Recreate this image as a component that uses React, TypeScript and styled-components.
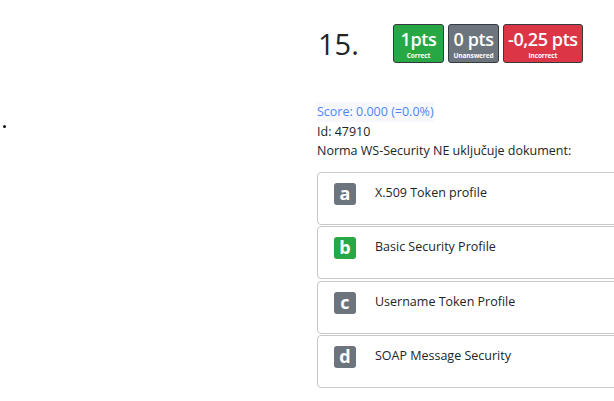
import React from "react";
import styled, { createGlobalStyle } from "styled-components";

const Global = createGlobalStyle`
  html, body { margin: 0; padding: 0; background: #fff; overflow: hidden; }
  body { font-family: "Open Sans", "Noto Sans", sans-serif; color: #212529; }
`;

const Page = styled.div`
  display: grid;
  grid-template-columns: 317px 360px;
  width: 614px;
  height: 401px;
  overflow: hidden;
`;

const BulletCol = styled.div`
  padding-top: 125px;
  padding-left: 3px;
`;

const Bullet = styled.span`
  display: block;
  width: 3px;
  height: 3px;
  border-radius: 50%;
  background: #111;
`;

const Content = styled.div`
  display: flex;
  flex-direction: column;
  padding-top: 24px;
`;

const Header = styled.div`
  display: flex;
  align-items: center;
  height: 39px;
`;

const Number = styled.div`
  font-size: 29px;
  line-height: 1;
  width: 75px;
  padding-left: 1px;
  color: #212529;
`;

const Badges = styled.div`
  display: flex;
  gap: 4px;
`;

const Badge = styled.div<{ $bg: string }>`
  display: flex;
  flex-direction: column;
  align-items: center;
  justify-content: center;
  height: 39px;
  min-width: 51px;
  box-sizing: border-box;
  padding: 0 4px;
  background: ${(p) => p.$bg};
  border: 1px solid #343a40;
  border-radius: 3px;
  color: #fff;
`;

const BadgeValue = styled.span`
  font-size: 18px;
  line-height: 24px;
  font-weight: 600;
  letter-spacing: -0.4px;
`;

const BadgeLabel = styled.span`
  font-size: 6.5px;
  line-height: 9px;
  font-weight: 700;
  letter-spacing: -0.1px;
`;

const Info = styled.div`
  margin-top: 39px;
  font-size: 12.5px;
  line-height: 19.5px;
  display: flex;
  flex-direction: column;
  align-items: flex-start;
`;

const Score = styled.span`
  color: #4f86f7;
  background: #f7f8fb;
`;

const Options = styled.div`
  margin-top: 11px;
  display: flex;
  flex-direction: column;
  gap: 1.5px;
`;

const Card = styled.div`
  display: flex;
  align-items: flex-start;
  gap: 19px;
  height: 53px;
  box-sizing: border-box;
  padding: 10px 16px 0;
  border: 1px solid #c8c8c8;
  border-radius: 4px;
  width: 340px;
`;

const Letter = styled.div<{ $bg: string }>`
  width: 22px;
  height: 22px;
  flex: none;
  border-radius: 3px;
  background: ${(p) => p.$bg};
  color: #fff;
  font-weight: 700;
  font-size: 18px;
  line-height: 21px;
  text-align: center;
`;

const OptionText = styled.div`
  font-size: 12.5px;
  line-height: 20px;
`;

const options = [
  { l: "a", t: "X.509 Token profile", c: "#6c757d" },
  { l: "b", t: "Basic Security Profile", c: "#28a745" },
  { l: "c", t: "Username Token Profile", c: "#6c757d" },
  { l: "d", t: "SOAP Message Security", c: "#6c757d" },
];

export default function App() {
  return (
    <>
      <Global />
      <Page>
        <BulletCol>
          <Bullet />
        </BulletCol>
        <Content>
          <Header>
            <Number>15.</Number>
            <Badges>
              <Badge $bg="#28a745">
                <BadgeValue>1pts</BadgeValue>
                <BadgeLabel>Correct</BadgeLabel>
              </Badge>
              <Badge $bg="#6c757d">
                <BadgeValue>0 pts</BadgeValue>
                <BadgeLabel>Unanswered</BadgeLabel>
              </Badge>
              <Badge $bg="#dc3545">
                <BadgeValue>-0,25 pts</BadgeValue>
                <BadgeLabel>Incorrect</BadgeLabel>
              </Badge>
            </Badges>
          </Header>
          <Info>
            <Score>Score: 0.000 (=0.0%)</Score>
            <span>Id: 47910</span>
            <span>Norma WS-Security NE uključuje dokument:</span>
          </Info>
          <Options>
            {options.map((o) => (
              <Card key={o.l}>
                <Letter $bg={o.c}>{o.l}</Letter>
                <OptionText>{o.t}</OptionText>
              </Card>
            ))}
          </Options>
        </Content>
      </Page>
    </>
  );
}
